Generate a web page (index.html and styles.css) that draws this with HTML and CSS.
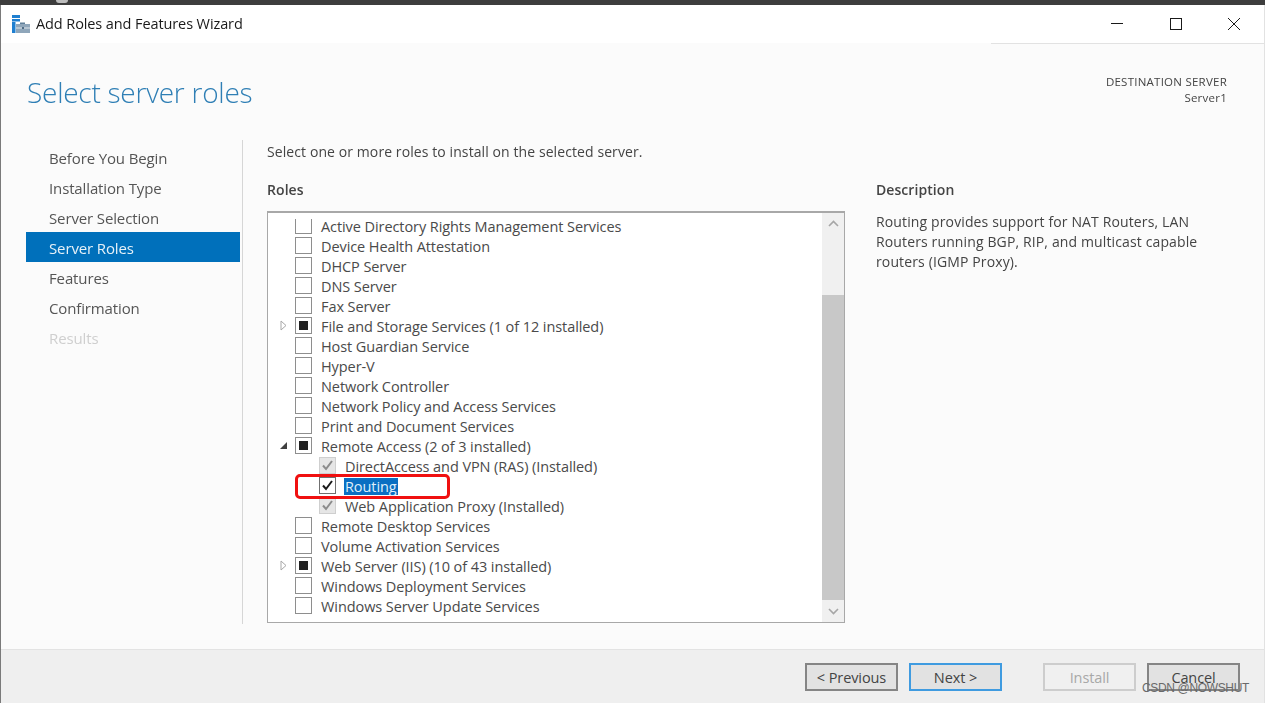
FILE: index.html
```html
<!DOCTYPE html>
<html lang="en">
<head>
<meta charset="utf-8">
<title>Add Roles and Features Wizard</title>
<link rel="stylesheet" href="styles.css">
</head>
<body>
<div class="strip"><span class="strip-glyph"></span></div>
<div class="window">
  <header class="titlebar">
    <svg class="app-icon" width="19" height="19" viewBox="0 0 19 19">
      <rect x="0" y="0" width="8" height="3" fill="#1f7fd0"/>
      <rect x="0" y="4" width="8" height="2.5" fill="#1f7fd0"/>
      <rect x="0" y="7" width="3.5" height="11" fill="#1f7fd0"/>
      <path d="M8 7.500h5v2H8z" fill="#5f7f99"/>
      <rect x="4" y="9" width="14" height="9" fill="#8fa6ba"/>
      <rect x="4" y="12.500" width="14" height="1" fill="#dfe6ec"/>
      <rect x="10" y="12" width="2" height="2" fill="#4f6c85"/>
    </svg>
    <span class="app-title">Add Roles and Features Wizard</span>
    <div class="controls">
      <svg width="14" height="14" viewBox="0 0 14 14"><path d="M1 6.500h12" stroke="#1a1a1a" stroke-width="1" fill="none"/></svg>
      <svg width="14" height="14" viewBox="0 0 14 14"><rect x="1.500" y="1.500" width="11" height="11" stroke="#1a1a1a" stroke-width="1" fill="none"/></svg>
      <svg width="14" height="14" viewBox="0 0 14 14"><path d="M1 1l12 12M13 1L1 13" stroke="#1a1a1a" stroke-width="1" fill="none"/></svg>
    </div>
  </header>

  <section class="page-head">
    <h1>Select server roles</h1>
    <div class="destination"><div>DESTINATION SERVER</div><div>Server1</div></div>
  </section>

  <main class="body">
    <nav class="steps">
      <a class="step">Before You Begin</a>
      <a class="step">Installation Type</a>
      <a class="step">Server Selection</a>
      <a class="step current">Server Roles</a>
      <a class="step">Features</a>
      <a class="step">Confirmation</a>
      <a class="step disabled">Results</a>
    </nav>
    <div class="content">
      <p class="intro">Select one or more roles to install on the selected server.</p>
      <div class="columns">
        <div class="roles">
          <h2>Roles</h2>
          <div class="listbox">
            <div class="rows">
              <div class="row first"><span class="exp"></span><span class="box"></span><span class="label">Active Directory Rights Management Services</span></div>
              <div class="row"><span class="exp"></span><span class="box"></span><span class="label">Device Health Attestation</span></div>
              <div class="row"><span class="exp"></span><span class="box"></span><span class="label">DHCP Server</span></div>
              <div class="row"><span class="exp"></span><span class="box"></span><span class="label">DNS Server</span></div>
              <div class="row"><span class="exp"></span><span class="box"></span><span class="label">Fax Server</span></div>
              <div class="row"><span class="exp"><svg width="9" height="11" viewBox="0 0 9 11"><path d="M2 1l5 4.500L2 10z" fill="#fff" stroke="#a8a8a8"/></svg></span><span class="box partial"></span><span class="label">File and Storage Services (1 of 12 installed)</span></div>
              <div class="row"><span class="exp"></span><span class="box"></span><span class="label">Host Guardian Service</span></div>
              <div class="row"><span class="exp"></span><span class="box"></span><span class="label">Hyper-V</span></div>
              <div class="row"><span class="exp"></span><span class="box"></span><span class="label">Network Controller</span></div>
              <div class="row"><span class="exp"></span><span class="box"></span><span class="label">Network Policy and Access Services</span></div>
              <div class="row"><span class="exp"></span><span class="box"></span><span class="label">Print and Document Services</span></div>
              <div class="row"><span class="exp"><svg width="9" height="11" viewBox="0 0 9 11"><path d="M8 2v7H1z" fill="#404040"/></svg></span><span class="box partial"></span><span class="label">Remote Access (2 of 3 installed)</span></div>
              <div class="row child"><span class="box locked"><svg width="13" height="13" viewBox="0 0 13 13"><path d="M2 6.500l3 3.500 6-8" stroke="#8c8c8c" stroke-width="2" fill="none"/></svg></span><span class="label">DirectAccess and VPN (RAS) (Installed)</span></div>
              <div class="row child"><span class="box checked"><svg width="13" height="13" viewBox="0 0 13 13"><path d="M2 6.500l3 3.500 6-8" stroke="#1a1a1a" stroke-width="2" fill="none"/></svg></span><span class="label selected">Routing</span></div>
              <div class="row child"><span class="box locked"><svg width="13" height="13" viewBox="0 0 13 13"><path d="M2 6.500l3 3.500 6-8" stroke="#8c8c8c" stroke-width="2" fill="none"/></svg></span><span class="label">Web Application Proxy (Installed)</span></div>
              <div class="row"><span class="exp"></span><span class="box"></span><span class="label">Remote Desktop Services</span></div>
              <div class="row"><span class="exp"></span><span class="box"></span><span class="label">Volume Activation Services</span></div>
              <div class="row"><span class="exp"><svg width="9" height="11" viewBox="0 0 9 11"><path d="M2 1l5 4.500L2 10z" fill="#fff" stroke="#a8a8a8"/></svg></span><span class="box partial"></span><span class="label">Web Server (IIS) (10 of 43 installed)</span></div>
              <div class="row"><span class="exp"></span><span class="box"></span><span class="label">Windows Deployment Services</span></div>
              <div class="row"><span class="exp"></span><span class="box"></span><span class="label">Windows Server Update Services</span></div>
            </div>
            <div class="scrollbar">
              <div class="track-top"><svg width="11" height="7" viewBox="0 0 11 7"><path d="M1 6l4.500-4.500L10 6" stroke="#a6a6a6" stroke-width="1.600" fill="none"/></svg></div>
              <div class="thumb"></div>
              <div class="track-bottom"><svg width="11" height="7" viewBox="0 0 11 7"><path d="M1 1l4.500 4.500L10 1" stroke="#a6a6a6" stroke-width="1.600" fill="none"/></svg></div>
            </div>
            <div class="callout"></div>
          </div>
        </div>
        <aside class="description">
          <h2>Description</h2>
          <p>Routing provides support for NAT Routers, LAN Routers running BGP, RIP, and multicast capable routers (IGMP Proxy).</p>
        </aside>
      </div>
    </div>
  </main>

  <footer class="footer">
    <button class="btn">&lt; Previous</button>
    <button class="btn primary">Next &gt;</button>
    <button class="btn off">Install</button>
    <button class="btn">Cancel</button>
    <span class="watermark">CSDN @NOWSHUT</span>
  </footer>
</div>
</body>
</html>
```
FILE: styles.css
```css
* { box-sizing: border-box; }
html, body { margin: 0; height: 100%; overflow: hidden; }
body {
  display: flex;
  flex-direction: column;
  background: #fbfbfb;
  font-family: "Open Sans", "Noto Sans", sans-serif;
  font-size: 14px;
  color: #454545;
}
.strip { height: 5px; background: #3d3d3d; position: relative; flex: none; }
.strip-glyph { position: absolute; left: 56px; top: 0; width: 12px; height: 3px; background: #bdbdbd; border-radius: 0 0 6px 6px; }
.window { flex: 1; display: flex; flex-direction: column; border-left: 1px solid #7a7a7a; border-right: 1px solid #e2e2e2; min-height: 0; filter: blur(.3px); }

.titlebar { height: 38px; flex: none; background: #fff; display: flex; align-items: center; padding-left: 11px; position: relative; }
.titlebar::after { content: ""; position: absolute; right: 0; bottom: -1px; width: 273px; height: 1px; background: #e2e2e2; }
.app-icon { margin-right: 5px; }
.app-title { color: #1a1a1a; font-size: 14.500px; letter-spacing: -.1px; margin-top: -2px; }
.controls { margin-left: auto; display: flex; gap: 44.500px; padding-right: 23px; }

.page-head { height: 97px; flex: none; display: flex; justify-content: space-between; padding: 29px 37px 0 26px; }
h1 { margin: 0; font-weight: 300; font-size: 28px; line-height: 40px; color: #2f7fb5; letter-spacing: -.25px; }
.destination { text-align: right; font-size: 11.500px; line-height: 16px; color: #444; padding-top: 2px; letter-spacing: .24px; }

.body { flex: 1; display: flex; min-height: 0; padding-left: 25px; }
.steps { width: 217px; height: 484px; border-right: 1px solid #d6d6d6; padding-top: 2px; flex: none; display: flex; flex-direction: column; }
.step { height: 30px; width: 214px; padding: 1px 0 0 23px; line-height: 30px; font-size: 15px; letter-spacing: -.13px; color: #555; }
.step.current { background: #0070bb; color: #e6f1f8; }
.step.disabled { color: #cfcfcf; }

.content { flex: 1; padding-left: 24px; min-width: 0; }
.intro { margin: 0; padding-top: 2px; line-height: 20px; color: #444; letter-spacing: .09px; font-size: 14px; }
.columns { display: flex; margin-top: 18px; }
h2 { margin: 0; font-size: 14px; font-weight: 600; line-height: 20px; color: #444; letter-spacing: .07px; }
.roles { width: 578px; flex: none; }
.listbox { position: relative; margin-top: 11px; height: 412px; width: 578px; border: 1px solid #a8a8a8; border-top-width: 2px; background: #fff; display: flex; }
.rows { flex: 1; margin-top: 5px; height: 390px; }
.row { height: 20px; display: flex; align-items: center; font-size: 14.500px; letter-spacing: -.08px; color: #4a4a4a; white-space: nowrap; }
.row.first { margin-top: -3px; }
.row.first .box { height: 15px; border-top: 0; margin-top: 2px; }
.label { margin-top: 2px; }
.exp { width: 14px; margin-left: 8px; margin-right: 5px; display: flex; justify-content: center; flex: none; }
.box { width: 17px; height: 17px; border: 1px solid #8e8e8e; background: #fff; margin-right: 9px; flex: none; display: flex; align-items: center; justify-content: center; }
.box.partial::after { content: ""; width: 9px; height: 9px; background: #222; }
.box.locked { background: #e6e6e6; border-color: #cfcfcf; }
.box.checked { border-color: #707070; }
.row.child { padding-left: 51px; }
.row.child .box { margin-right: 9px; }
.selected { background: #0a6fc2; color: #dfeefa; padding: 0 1px; margin-left: -1px; height: 17px; line-height: 17px; }
.scrollbar { width: 22px; flex: none; display: flex; flex-direction: column; background: #f0f0f0; }
.track-top { height: 82px; padding-top: 7px; display: flex; justify-content: center; align-items: flex-start; }
.thumb { height: 305px; background: #c8c8c8; }
.track-bottom { flex: 1; display: flex; justify-content: center; align-items: center; }
.callout { position: absolute; left: 27px; top: 261px; width: 155px; height: 25px; border: 3px solid #f01010; border-radius: 5px; }

.description { padding-left: 31px; width: 362px; }
.description p { margin: 12px 0 0; line-height: 20px; color: #444; font-size: 14px; letter-spacing: .13px; }

.footer { height: 54px; flex: none; background: #efefef; border-top: 1px solid #e3e3e3; display: flex; align-items: flex-start; padding-top: 13px; padding-left: 804px; position: relative; }
.btn { width: 93px; height: 28px; padding: 0; border: 2px solid #858585; background: #e2e2e2; font: inherit; font-size: 14.500px; letter-spacing: -.1px; color: #444; margin-right: 11px; }
.btn.primary { border-color: #3f9be0; margin-right: 41px; }
.btn.off { background: #f0f0f0; border-color: #cdcdcd; color: #a8a8a8; }
.watermark { position: absolute; left: 1141px; top: 31px; font-family: "Liberation Sans", sans-serif; font-size: 12px; color: #6a6a6a; letter-spacing: -.35px; }
```
